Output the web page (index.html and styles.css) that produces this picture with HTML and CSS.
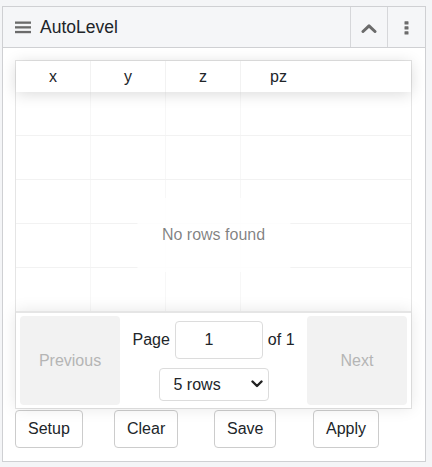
FILE: index.html
```html
<!DOCTYPE html>
<html>
<head>
<meta charset="utf-8">
<link rel="stylesheet" href="styles.css">
</head>
<body>
<div class="panel">
  <div class="panel-header">
    <div class="panel-title">
      <svg class="hamburger" width="16" height="13" viewBox="0 0 16 13">
        <rect x="0" y="0.5" width="16" height="2.3" fill="#6b6b6b"/>
        <rect x="0" y="5.2" width="16" height="2.3" fill="#6b6b6b"/>
        <rect x="0" y="9.9" width="16" height="2.3" fill="#6b6b6b"/>
      </svg>
      <span>AutoLevel</span>
    </div>
    <div class="hdr-btn collapse">
      <svg width="16" height="10" viewBox="0 0 16 10">
        <path d="M2 8.5 L8 2.8 L14 8.5" fill="none" stroke="#6b6b6b" stroke-width="3" stroke-linecap="round" stroke-linejoin="round"/>
      </svg>
    </div>
    <div class="hdr-btn menu">
      <svg width="5" height="14" viewBox="0 0 5 14">
        <rect x="0.5" y="0.2" width="4" height="3.4" rx="0.6" fill="#6b6b6b"/>
        <rect x="0.5" y="5.2" width="4" height="3.4" rx="0.6" fill="#6b6b6b"/>
        <rect x="0.5" y="10.2" width="4" height="3.4" rx="0.6" fill="#6b6b6b"/>
      </svg>
    </div>
  </div>
  <div class="panel-body">
    <div class="rtable">
      <div class="thead">
        <div class="th">x</div>
        <div class="th">y</div>
        <div class="th">z</div>
        <div class="th last">pz</div>
        <div class="fill"></div>
      </div>
      <div class="tbody">
        <div class="tr"><div class="td"></div><div class="td"></div><div class="td"></div><div class="td last"></div><div class="fill"></div></div>
        <div class="tr"><div class="td"></div><div class="td"></div><div class="td"></div><div class="td last"></div><div class="fill"></div></div>
        <div class="tr"><div class="td"></div><div class="td"></div><div class="td"></div><div class="td last"></div><div class="fill"></div></div>
        <div class="tr"><div class="td"></div><div class="td"></div><div class="td"></div><div class="td last"></div><div class="fill"></div></div>
        <div class="tr"><div class="td"></div><div class="td"></div><div class="td"></div><div class="td last"></div><div class="fill"></div></div>
      </div>
      <div class="pagination">
        <button class="pg-btn" disabled>Previous</button>
        <div class="pg-center">
          <span class="pg-info">Page <input class="pg-input" type="text" value="1"> of 1</span>
          <select class="pg-select">
            <option>5 rows</option>
            <option>10 rows</option>
          </select>
        </div>
        <button class="pg-btn" disabled>Next</button>
      </div>
      <div class="nodata">No rows found</div>
    </div>
    <div class="actions">
      <button class="btn">Setup</button>
      <button class="btn">Clear</button>
      <button class="btn">Save</button>
      <button class="btn">Apply</button>
    </div>
  </div>
</div>
</body>
</html>
```

FILE: styles.css
```css
* { box-sizing: border-box; }

body {
  margin: 0;
  background: #f4f5f7;
  font-family: "Liberation Sans", Arial, sans-serif;
  font-size: 16px;
  color: #212529;
}

.panel {
  margin: 6px 6px 0 2px;
  width: 424px;
  border: 1px solid #cfd0d3;
  background: #fff;
}

.panel-header {
  display: flex;
  height: 41px;
  background: #f5f6f8;
  border-bottom: 1px solid #cfd0d3;
}

.panel-title {
  flex: 1;
  display: flex;
  align-items: center;
  padding-left: 12px;
  font-size: 17.5px;
  color: #212529;
}

.hamburger {
  margin-right: 9px;
  margin-top: 1px;
}

.hdr-btn {
  display: flex;
  align-items: center;
  justify-content: center;
  border-left: 1px solid #d6d7da;
}

.collapse { width: 37px; padding-top: 1px; }
.menu { width: 38px; padding-top: 1px; }

.panel-body {
  padding: 12px 13px 13px 12px;
}

.rtable {
  position: relative;
  display: flex;
  flex-direction: column;
  height: 349px;
  border: 1px solid rgba(0,0,0,0.1);
}

.thead {
  display: flex;
  height: 31px;
  box-shadow: 0 2px 15px 0 rgba(0,0,0,0.15);
  position: relative;
  z-index: 1;
}

.th {
  width: 75px;
  text-align: center;
  line-height: 31px;
  border-right: 1px solid rgba(0,0,0,0.05);
}

.th.last, .td.last { border-right: none; }

.fill { flex: 1; }

.tbody {
  flex: 1;
  display: flex;
  flex-direction: column;
}

.tr {
  flex: 1;
  display: flex;
  border-bottom: 1px solid rgba(0,0,0,0.05);
}

.tr:last-child { border-bottom: none; }

.td {
  width: 75px;
  border-right: 1px solid rgba(0,0,0,0.03);
}

.pagination {
  display: grid;
  grid-template-columns: 100px 1fr 100px;
  height: 97px;
  padding: 3px 4px 3px 4px;
  border-top: 2px solid rgba(0,0,0,0.1);
  box-shadow: 0 0 15px 0 rgba(0,0,0,0.1);
  position: relative;
  z-index: 1;
  background: #fff;
}

.pg-btn {
  border: none;
  border-radius: 4px;
  background: #f2f2f2;
  color: #b5b5b5;
  font-family: inherit;
  font-size: 16px;
  padding: 0;
}

.pg-center {
  display: flex;
  flex-direction: column;
  align-items: center;
  justify-content: center;
  gap: 9px;
}

.pg-info {
  display: flex;
  align-items: center;
  gap: 5px;
  color: #212529;
}

.pg-input {
  width: 88px;
  height: 38px;
  border: 1px solid #dcdcdc;
  border-radius: 4px;
  text-align: center;
  font-family: inherit;
  font-size: 16px;
  color: #212529;
  padding: 0 20px 0 0;
  margin-left: 0;
}

.pg-select {
  appearance: none;
  -webkit-appearance: none;
  width: 110px;
  height: 33px;
  border: 1px solid #dcdcdc;
  border-radius: 4px;
  background: #fff url("data:image/svg+xml;utf8,<svg xmlns='http://www.w3.org/2000/svg' width='12' height='8' viewBox='0 0 12 8'><path d='M1.5 1.5 L6 6 L10.5 1.5' fill='none' stroke='%23222' stroke-width='2.4' stroke-linecap='round' stroke-linejoin='round'/></svg>") no-repeat right 5px center;
  font-family: inherit;
  font-size: 16px;
  color: #212529;
  padding: 0 0 0 14px;
}

.nodata {
  position: absolute;
  left: 50%;
  top: 50%;
  transform: translate(-50%, -50%);
  background: rgba(255,255,255,0.85);
  padding: 28px 25px;
  color: rgba(0,0,0,0.5);
  white-space: nowrap;
  z-index: 2;
}

.actions {
  display: grid;
  grid-template-columns: 99px 100px 99px auto;
  justify-items: start;
  margin-top: 1px;
}

.btn {
  height: 38px;
  padding: 0 12px;
  border: 1px solid #cccccc;
  border-radius: 4px;
  background: #fff;
  font-family: inherit;
  font-size: 16px;
  color: #212529;
}
```
